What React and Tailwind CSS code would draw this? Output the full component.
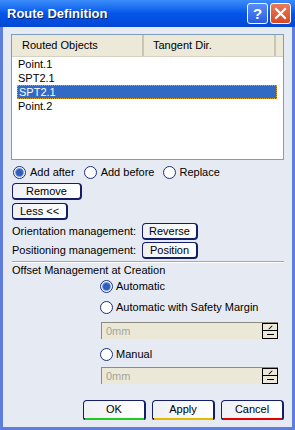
import React from 'react';

const font = { fontFamily: '"Liberation Sans", Arial, sans-serif' };

function Radio({ checked }) {
  return (
    <span className="w-[13px] h-[13px] shrink-0 rounded-full border border-[#1d2f80] bg-white flex items-center justify-center">
      {checked && <span className="w-[7px] h-[7px] rounded-full bg-[#2f5fbd] ring-1 ring-[#7c9be0]" />}
    </span>
  );
}

function Btn({ children, className = '' }) {
  return (
    <div
      className={`flex items-center justify-center rounded-[4px] border border-[#141d66] border-r-2 border-b-2 bg-gradient-to-r from-[#eef0f4] to-white text-[11px] text-black ${className}`}
    >
      {children}
    </div>
  );
}

function Spin() {
  return (
    <div className="ml-[90px] w-[177px] h-[17px] flex border-t border-l border-[#8d8b80] bg-[#ebe8d8]">
      <div className="flex-1 flex items-center pl-[4px] text-[11px] text-[#a7a59a]">0mm</div>
      <div className="w-[16px] flex flex-col">
        <div className="h-[8px] border border-black bg-[#ece9d8] flex items-center justify-center">
          <span className="w-[5px] h-[1px] bg-black -rotate-45" />
        </div>
        <div className="h-[8px] border border-t-0 border-black bg-[#ece9d8] flex items-center justify-center">
          <span className="w-[7px] h-[1px] bg-black" />
        </div>
      </div>
    </div>
  );
}

export default function App() {
  const rows = ['Point.1', 'SPT2.1', 'SPT2.1', 'Point.2'];

  return (
    <div style={font} className="w-[295px] h-[430px] flex flex-col bg-[#5f7ddc] overflow-hidden">
      {/* Title bar */}
      <div className="h-[27px] shrink-0 flex items-center bg-gradient-to-b from-[#3b8cf9] via-[#0356ea] to-[#0447d3] pl-[7px] pr-[4px]">
        <span className="text-[13px] font-bold text-white [text-shadow:1px_1px_0_#0a1c6a] flex-1">Route Definition</span>
        <div className="w-[21px] h-[21px] rounded-[3px] border border-white bg-gradient-to-b from-[#5b8df5] to-[#2a5ce0] flex items-center justify-center text-white text-[15px] font-bold leading-none">?</div>
        <div className="ml-[2px] w-[21px] h-[21px] rounded-[3px] border border-white bg-gradient-to-b from-[#ea7a58] to-[#d8471f] flex items-center justify-center">
          <svg width="13" height="13" viewBox="0 0 13 13">
            <path d="M2 2 L11 11 M11 2 L2 11" stroke="white" strokeWidth="2.2" strokeLinecap="square" />
          </svg>
        </div>
      </div>

      {/* Body */}
      <div className="flex-1 mx-[3px] mb-[3px] bg-[#e6ebf3] px-[8px] flex flex-col text-[11px] text-black">
        {/* List */}
        <div className="mt-[7px] h-[126px] border border-[#7f9db9] bg-white flex flex-col">
          <div className="h-[22px] flex bg-[#ece9d8] border-b border-[#d6d2c2]">
            <div className="w-[132px] flex items-center pl-[10px] border-r-2 border-r-[#c9c6b6]">Routed Objects</div>
            <div className="w-[132px] flex items-center pl-[9px] border-r-2 border-r-[#c9c6b6]">Tangent Dir.</div>
          </div>
          {rows.map((r, i) => (
            <div
              key={i}
              className={`h-[14px] w-[260px] ml-[5px] flex items-center pl-[1px] ${
                i === 2 ? 'bg-[#316ac5] text-white border border-dotted border-[#e0a030]' : ''
              }`}
            >
              {r}
            </div>
          ))}
        </div>

        {/* Radio row */}
        <div className="mt-[6px] h-[13px] ml-[2px] flex items-center gap-[9px]">
          <div className="flex items-center gap-[4px]"><Radio checked /><span>Add after</span></div>
          <div className="flex items-center gap-[4px]"><Radio /><span>Add before</span></div>
          <div className="flex items-center gap-[3px]"><Radio /><span>Replace</span></div>
        </div>

        <Btn className="mt-[4px] ml-[1px] w-[70px] h-[17px]">Remove</Btn>
        <Btn className="mt-[3px] ml-[1px] w-[56px] h-[17px]">Less &lt;&lt;</Btn>

        <div className="mt-[3px] ml-[1px] flex items-center h-[17px]">
          <span className="w-[130px]">Orientation management:</span>
          <Btn className="w-[56px] h-[17px]">Reverse</Btn>
        </div>
        <div className="mt-[2px] ml-[1px] flex items-center h-[17px]">
          <span className="w-[130px]">Positioning management:</span>
          <Btn className="w-[56px] h-[17px]">Position</Btn>
        </div>

        <div className="mt-[2px] ml-[1px] h-[2px] border-t border-[#a7a6a0] border-b border-b-white" />

        <div className="mt-[1px] ml-[1px] h-[13px] flex items-center">Offset Management at Creation</div>

        <div className="mt-[3px] ml-[89px] h-[13px] flex items-center gap-[3px]"><Radio checked /><span>Automatic</span></div>
        <div className="mt-[8px] ml-[89px] h-[13px] flex items-center gap-[3px]"><Radio /><span>Automatic with Safety Margin</span></div>
        <div className="mt-[8px]"><Spin /></div>
        <div className="mt-[9px] ml-[89px] h-[13px] flex items-center gap-[3px]"><Radio /><span>Manual</span></div>
        <div className="mt-[6px]"><Spin /></div>

        {/* Bottom buttons */}
        <div className="mt-[16px] flex justify-end gap-[6px]">
          {[
            ['OK', 'bg-[#1fcc1f]'],
            ['Apply', 'bg-[#e8b800]'],
            ['Cancel', 'bg-[#e00000]'],
          ].map(([t, c]) => (
            <div key={t} className="w-[63px] h-[20px] flex flex-col">
              <Btn className="flex-1 rounded-b-[2px]">{t}</Btn>
              <div className={`h-[2px] -mt-[2px] mx-[2px] ${c}`} />
            </div>
          ))}
        </div>
      </div>
    </div>
  );
}
